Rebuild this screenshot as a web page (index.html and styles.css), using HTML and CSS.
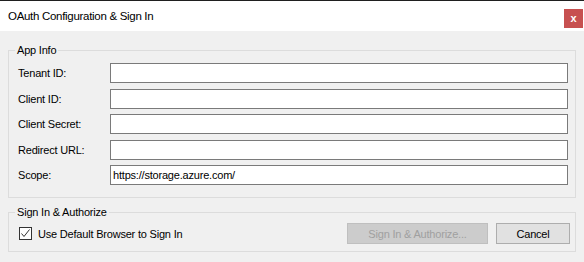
FILE: index.html
```html
<!DOCTYPE html>
<html lang="en">
<head>
  <meta charset="UTF-8" />
  <title>OAuth Configuration &amp; Sign In</title>
  <link rel="stylesheet" href="styles.css">
</head>
<body>
  <div class="window">
    <div class="title-bar">
      <span class="title">OAuth Configuration &amp; Sign In</span>
      <button class="close-btn">x</button>
    </div>

    <div class="dialog-body">
      <fieldset class="group app-info">
        <legend>App Info</legend>
        <div class="form-grid">
          <label for="tenant">Tenant ID:</label>
          <input type="text" id="tenant" />

          <label for="client">Client ID:</label>
          <input type="text" id="client" />

          <label for="secret">Client Secret:</label>
          <input type="text" id="secret" />

          <label for="redirect">Redirect URL:</label>
          <input type="text" id="redirect" />

          <label for="scope">Scope:</label>
          <input type="text" id="scope" value="https://storage.azure.com/" />
        </div>
      </fieldset>

      <fieldset class="group sign-in">
        <legend>Sign In &amp; Authorize</legend>
        <div class="sign-in-row">
          <label class="check">
            <span class="check-box">
              <svg width="11" height="11" viewBox="0 0 11 11">
                <path d="M1.5 5.5 L4 8.5 L9.5 1.5" fill="none" stroke="#333" stroke-width="1" />
              </svg>
            </span>
            Use Default Browser to Sign In
          </label>
          <div class="buttons">
            <button class="btn btn-authorize" disabled>Sign In &amp; Authorize...</button>
            <button class="btn btn-cancel">Cancel</button>
          </div>
        </div>
      </fieldset>
    </div>
  </div>
</body>
</html>
```

FILE: styles.css
```css
* {
  box-sizing: border-box;
  margin: 0;
  padding: 0;
}

body {
  width: 584px;
  height: 262px;
  overflow: hidden;
  background: #f0f0f0;
  font-family: 'Liberation Sans', Arial, sans-serif;
  font-size: 11px;
  letter-spacing: -0.2px;
  color: #000;
}

.window {
  border-top: 1px solid #1f1f1f;
}

.title-bar {
  height: 30px;
  background: #fff;
  display: flex;
  align-items: center;
  justify-content: space-between;
  padding-left: 8px;
  padding-right: 1px;
}

.title {
  font-size: 11.5px;
  letter-spacing: -0.3px;
  color: #000;
  margin-top: -1px;
}

.close-btn {
  width: 19px;
  height: 19px;
  margin-top: 4px;
  border: none;
  background: #c75050;
  color: #fff;
  font-family: 'Liberation Sans', Arial, sans-serif;
  font-weight: bold;
  font-size: 11px;
  line-height: 17px;
}

.dialog-body {
  padding: 13px 8px 0 8px;
}

.group {
  border: 1px solid #dcdcdc;
  width: 568px;
}

.group legend {
  margin-left: 6px;
  padding: 0 2px;
  line-height: 13px;
}

.form-grid {
  display: grid;
  grid-template-columns: 92px 458px;
  row-gap: 5.5px;
  align-items: center;
  padding: 6px 7px 12px 9px;
}

.form-grid input {
  height: 20px;
  border: 1px solid #7a7a7a;
  background: #fff;
  padding: 0 2px;
  font-family: 'Liberation Sans', Arial, sans-serif;
  font-size: 11px;
  letter-spacing: -0.2px;
  color: #000;
  outline: none;
}

.sign-in {
  margin-top: 8px;
  width: 568px;
}

.sign-in-row {
  display: flex;
  align-items: center;
  justify-content: space-between;
  padding: 4px 5px 7px 10px;
}

.check {
  display: flex;
  align-items: center;
  gap: 6px;
}

.check-box {
  width: 13px;
  height: 13px;
  border: 1px solid #333;
  background: #fff;
  display: flex;
  align-items: center;
  justify-content: center;
}

.buttons {
  display: flex;
  gap: 8px;
}

.btn {
  height: 21px;
  font-family: 'Liberation Sans', Arial, sans-serif;
  font-size: 11px;
  letter-spacing: -0.2px;
}

.btn-authorize {
  width: 141px;
  background: #cccccc;
  border: 1px solid #bfbfbf;
  color: #a0a0a0;
}

.btn-cancel {
  width: 74px;
  background: #e1e1e1;
  border: 1px solid #adadad;
  color: #000;
}
```
